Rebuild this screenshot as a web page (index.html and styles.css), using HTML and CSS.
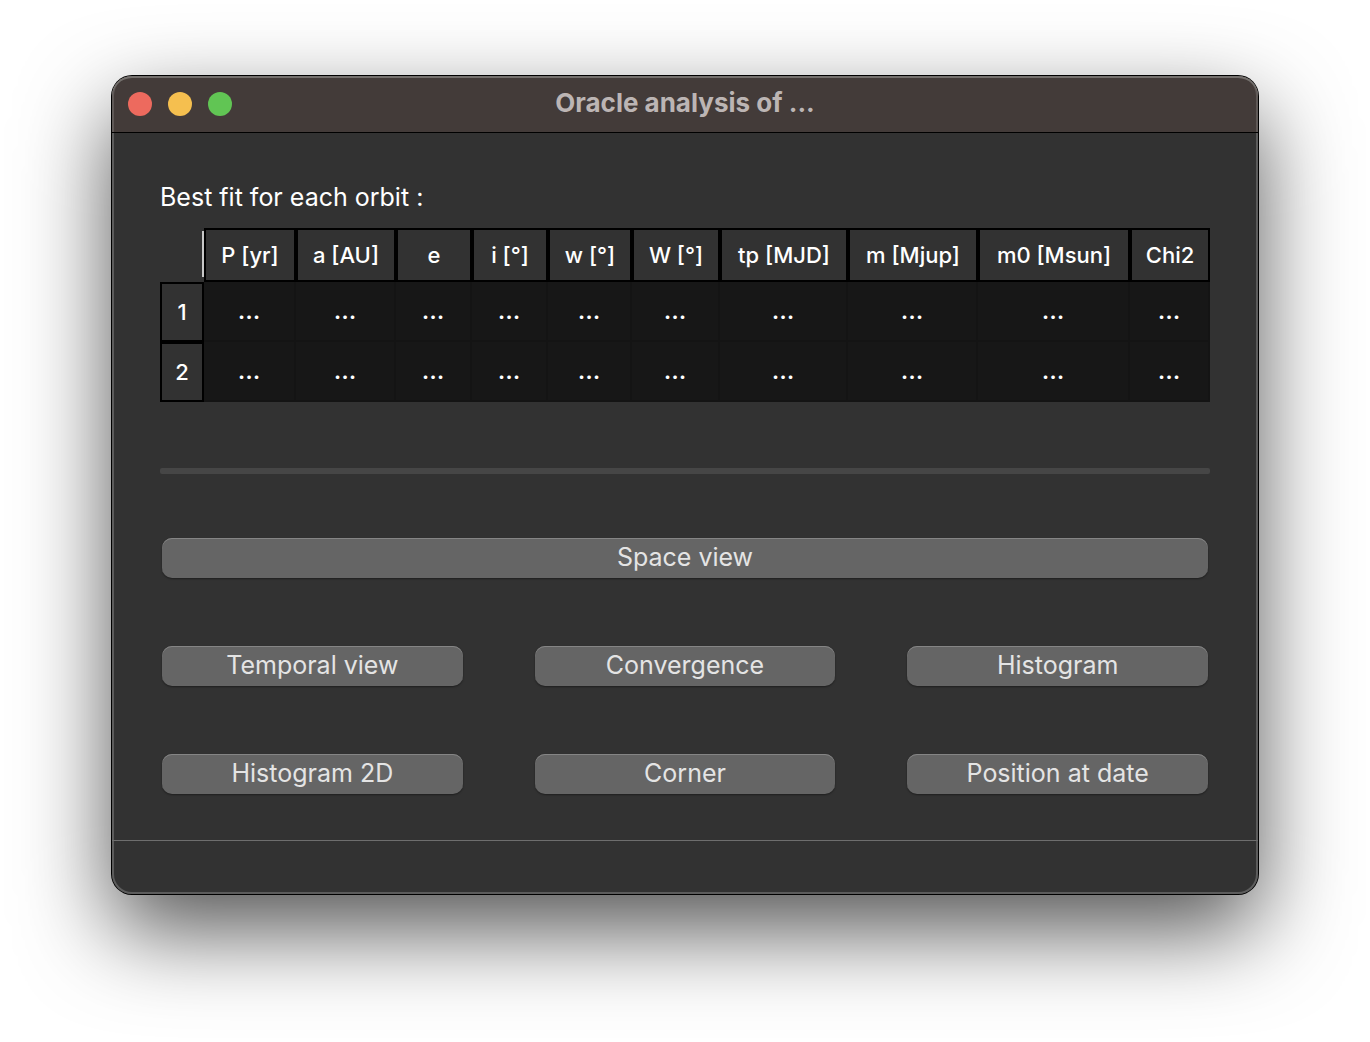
FILE: index.html
```html
<!DOCTYPE html>
<html lang="en">
<head>
<meta charset="utf-8">
<title>Oracle analysis of ...</title>
<link rel="stylesheet" href="styles.css">
</head>
<body>
<div class="window">
  <header class="titlebar">
    <div class="lights">
      <button class="light light-close" type="button" aria-label="Close"></button>
      <button class="light light-minimize" type="button" aria-label="Minimize"></button>
      <button class="light light-zoom" type="button" aria-label="Zoom"></button>
    </div>
    <h1 class="title">Oracle analysis of ...</h1>
  </header>
  <main class="content">
    <table class="fit-table">
      <caption class="caption">Best fit for each orbit :</caption>
      <colgroup>
        <col class="col-index"><col class="col-period"><col class="col-axis"><col class="col-ecc"><col class="col-incl"><col class="col-peri"><col class="col-node"><col class="col-time"><col class="col-mass"><col class="col-star"><col class="col-chi">
      </colgroup>
      <thead>
        <tr>
          <td class="corner"></td>
          <th scope="col">P [yr]</th>
          <th scope="col">a [AU]</th>
          <th scope="col">e</th>
          <th scope="col">i [°]</th>
          <th scope="col">w [°]</th>
          <th scope="col">W [°]</th>
          <th scope="col">tp [MJD]</th>
          <th scope="col">m [Mjup]</th>
          <th scope="col">m0 [Msun]</th>
          <th scope="col">Chi2</th>
        </tr>
      </thead>
      <tbody>
        <tr><th scope="row">1</th><td>...</td><td>...</td><td>...</td><td>...</td><td>...</td><td>...</td><td>...</td><td>...</td><td>...</td><td>...</td></tr>
        <tr><th scope="row">2</th><td>...</td><td>...</td><td>...</td><td>...</td><td>...</td><td>...</td><td>...</td><td>...</td><td>...</td><td>...</td></tr>
      </tbody>
    </table>
    <hr class="separator">
    <div class="actions">
      <button class="action action-wide" type="button">Space view</button>
      <button class="action" type="button">Temporal view</button>
      <button class="action" type="button">Convergence</button>
      <button class="action" type="button">Histogram</button>
      <button class="action" type="button">Histogram 2D</button>
      <button class="action" type="button">Corner</button>
      <button class="action" type="button">Position at date</button>
    </div>
  </main>
  <footer class="statusbar"></footer>
</div>
</body>
</html>
```
FILE: styles.css
```css
* {
  box-sizing: border-box;
}

body {
  margin: 0;
  padding: 76px 112px 148px;
  background: #fff;
  color: #fff;
  font-family: Inter, "Liberation Sans", sans-serif;
  font-size: 25px;
  line-height: 32px;
}

.window {
  border-radius: 20px;
  background: #323232;
  box-shadow:
    0 0 0 1px #000,
    inset 0 0 0 2px #5c5c5c,
    0 36px 90px rgba(0, 0, 0, 0.68);
}

.titlebar {
  display: grid;
  grid-template-columns: 1fr auto 1fr;
  align-items: center;
  height: 57px;
  padding: 0 16px;
  border-bottom: 1px solid #000;
  border-radius: 20px 20px 0 0;
  background: #433b39;
  box-shadow: inset 0 2px 0 #74706d, inset 2px 0 0 #5f5957, inset -2px 0 0 #5f5957;
}

.lights {
  display: flex;
  gap: 16px;
}

.light {
  width: 24px;
  height: 24px;
  padding: 0;
  border: 0;
  border-radius: 50%;
}

.light-close {
  background: #ed6a5e;
}

.light-minimize {
  background: #f5bf4f;
}

.light-zoom {
  background: #61c554;
}

.title {
  margin: 0;
  padding-bottom: 2px;
  color: #bcb5b4;
  font-size: 26px;
  font-weight: 700;
}

.content {
  padding: 48px 48px 46px;
}

.fit-table {
  width: 100%;
  table-layout: fixed;
  border-collapse: separate;
  border-spacing: 0;
}

.caption {
  padding-bottom: 15px;
  text-align: left;
}

.col-index { width: 44px; }
.col-period { width: 92px; }
.col-axis { width: 100px; }
.col-ecc,
.col-incl { width: 76px; }
.col-peri { width: 84px; }
.col-node { width: 88px; }
.col-time { width: 128px; }
.col-mass { width: 130px; }
.col-star { width: 152px; }
.col-chi { width: 80px; }

.fit-table th {
  padding: 0;
  border: 2px solid #000;
  font-size: 22px;
  font-weight: 500;
}

.fit-table thead th {
  height: 54px;
}

.fit-table tbody th {
  height: 60px;
}

.fit-table tbody td {
  padding: 0 0 2px;
  border: solid #141414;
  border-width: 0 2px 2px 0;
  background: #171717;
  font-weight: 500;
  text-align: center;
}

.corner {
  background: linear-gradient(#c8c8c8, #c8c8c8) right 3px / 2px 46px no-repeat;
}

.separator {
  height: 6px;
  margin: 66px 0 64px;
  border: 0;
  border-radius: 2px;
  background: #464646;
}

.actions {
  display: grid;
  grid-template-columns: repeat(3, 1fr);
  gap: 68px 72px;
  padding: 0 2px;
}

.action {
  height: 40px;
  padding: 0 0 2px;
  border: 0;
  border-radius: 10px;
  background: #656565;
  box-shadow: inset 0 1px 0 #858585, 0 1px 2px rgba(0, 0, 0, 0.4);
  color: #e4e4e4;
  font: inherit;
}

.action-wide {
  grid-column: 1 / -1;
}

.statusbar {
  height: 54px;
  border-top: 1px solid #6e6e6e;
}
```
